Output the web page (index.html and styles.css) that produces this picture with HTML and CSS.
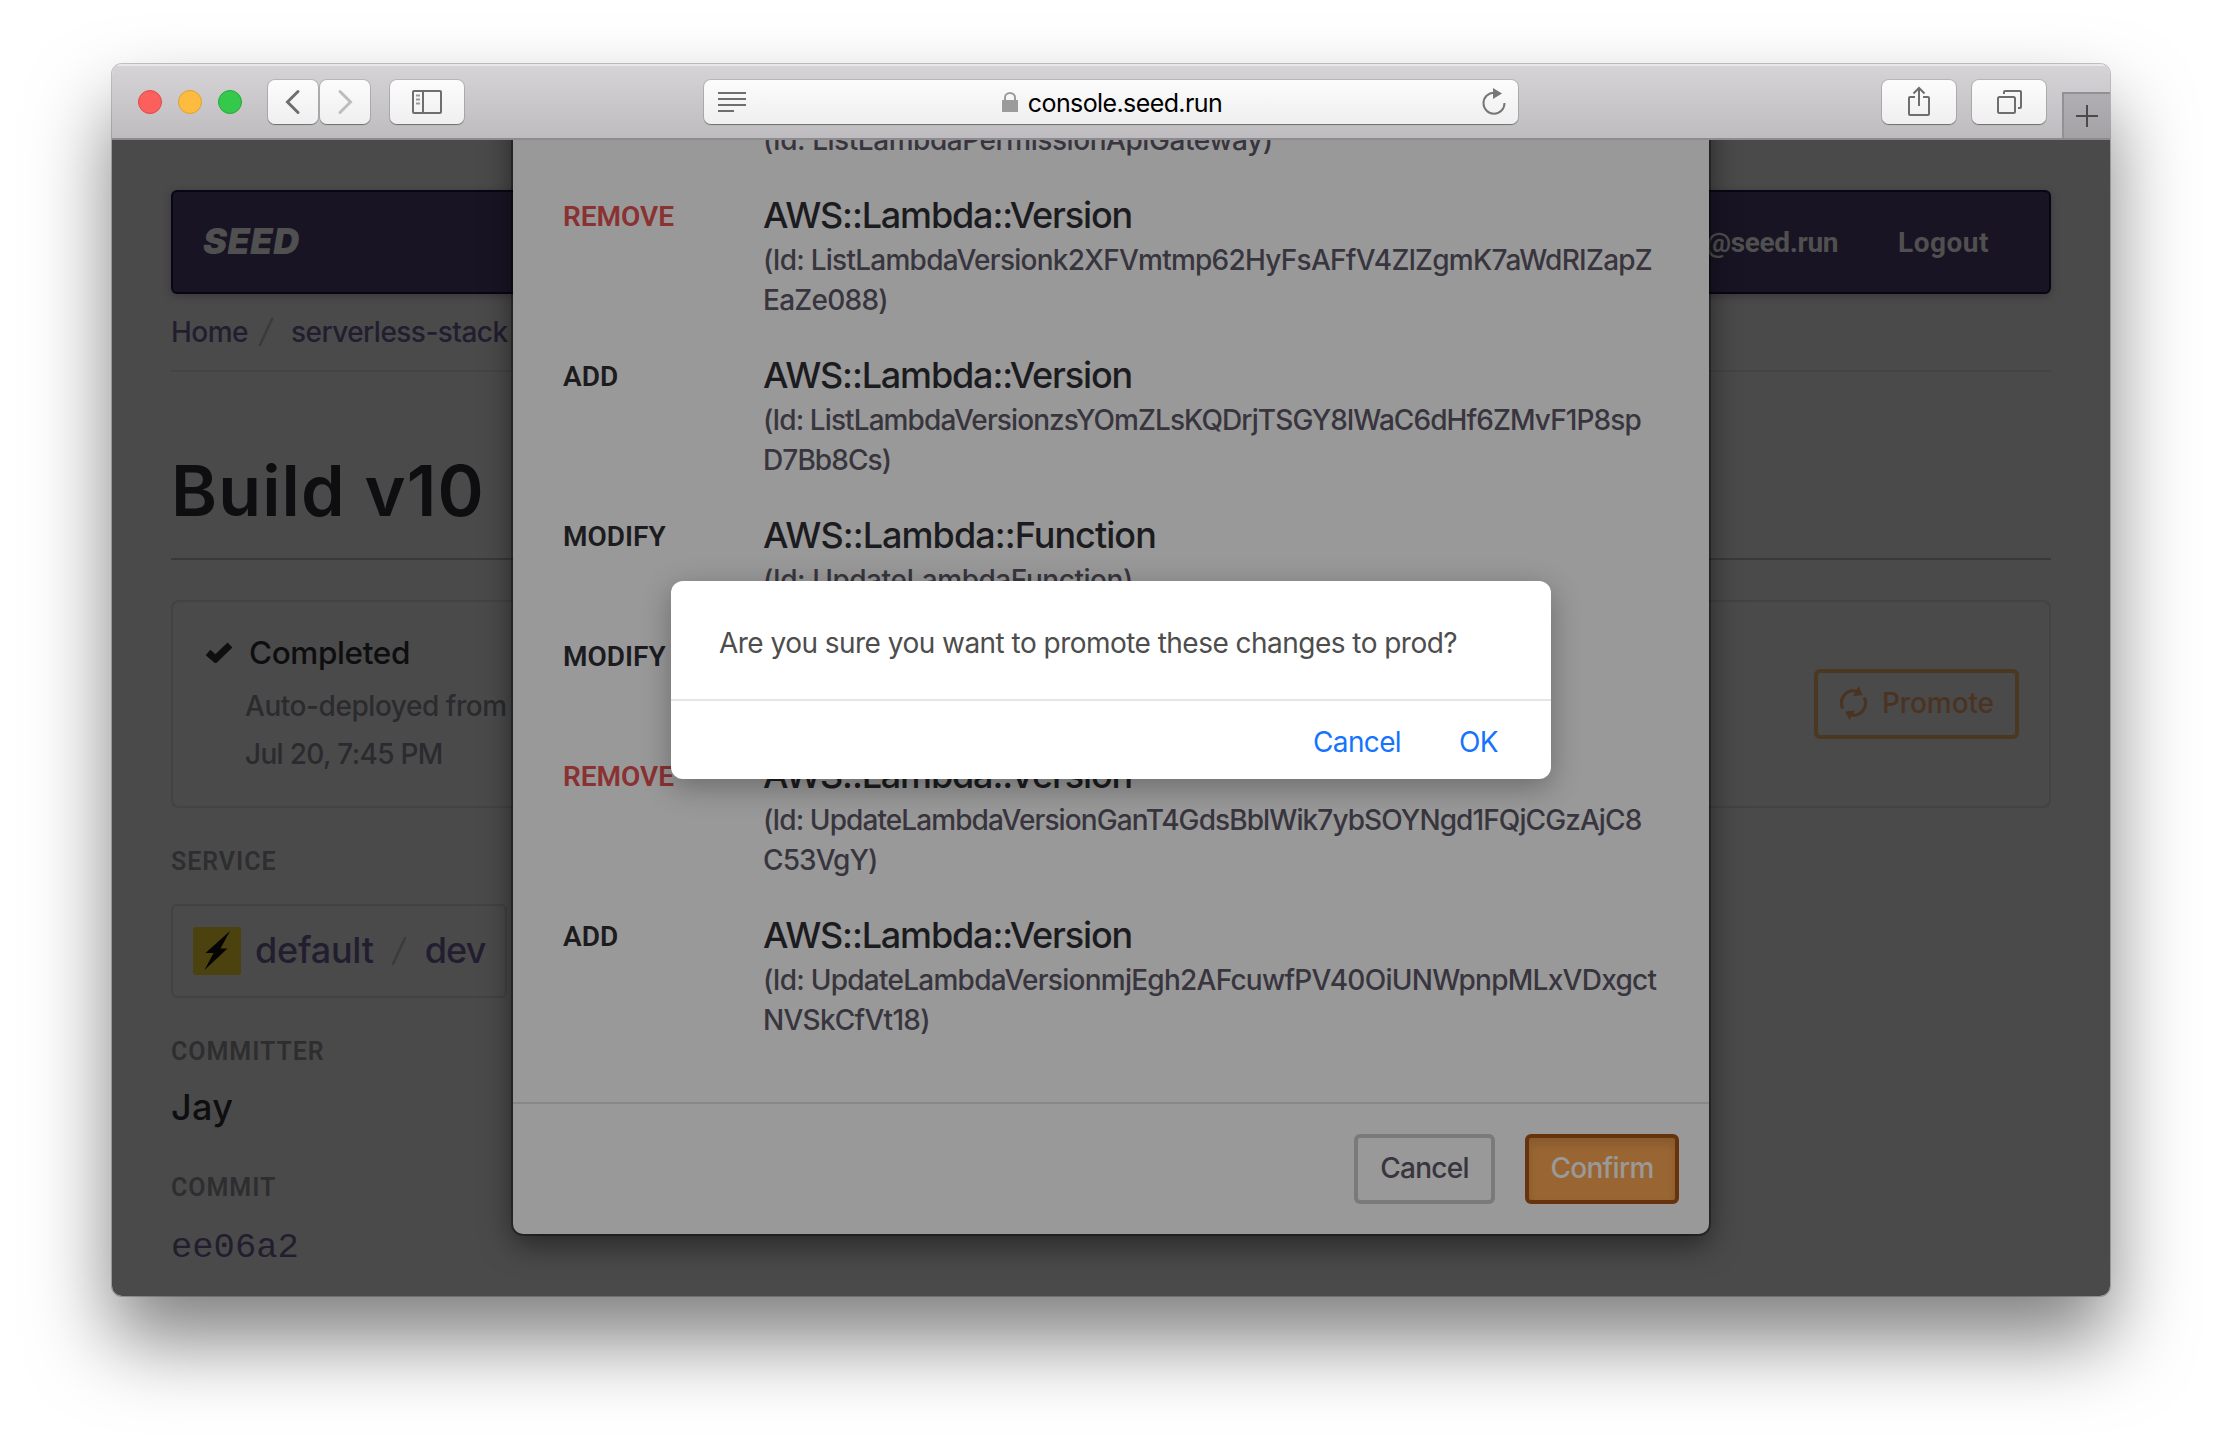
FILE: index.html
```html
<!DOCTYPE html>
<html lang="en">
<head>
<meta charset="utf-8">
<title>Seed Console</title>
<link rel="stylesheet" href="styles.css">
</head>
<body>
<div class="window">
  <header class="toolbar">
    <div class="lights"><i class="light red"></i><i class="light amber"></i><i class="light green"></i></div>
    <div class="history">
      <span class="tool"><svg width="50" height="44" viewBox="0 0 50 44"><path d="M30 11.500 19.500 22 30 32.500" fill="none" stroke="#6e6e6e" stroke-width="3" stroke-linecap="round"/></svg></span>
      <span class="tool"><svg width="50" height="44" viewBox="0 0 50 44"><path d="M20 11.500 30.500 22 20 32.500" fill="none" stroke="#bdbdbd" stroke-width="3" stroke-linecap="round"/></svg></span>
    </div>
    <span class="tool wide"><svg width="74" height="44" viewBox="0 0 74 44" fill="none" stroke="#6e6e6e" stroke-width="2"><rect x="23" y="11" width="28" height="22" rx="1"/><path d="M33 11v22"/><path d="M26 15.500h4M26 19.500h4M26 23.500h4" stroke="#999"/></svg></span>
    <div class="address">
      <svg width="30" height="24" viewBox="0 0 30 24" stroke="#6e6e6e" stroke-width="2"><path d="M0 3h28M0 9h28M0 15h28M0 21h16"/></svg>
      <span class="host"><svg width="16" height="20" viewBox="0 0 16 20"><path d="M3 9V5.500a5 4.500 0 0 1 10 0V9" fill="none" stroke="#9b9b9b" stroke-width="2"/><path d="M0 8h16v12H0z" fill="#9b9b9b"/></svg><b>console.seed.run</b></span>
      <svg class="reload" width="26" height="30" viewBox="0 0 26 30"><path d="M23.500 16A10.500 10.500 0 1 1 13 5.700" fill="none" stroke="#777" stroke-width="2"/><path d="M12 1v11l9-5.500z" fill="#777"/></svg>
    </div>
    <div class="actions">
      <span class="tool wide"><svg width="74" height="44" viewBox="0 0 74 44" fill="none" stroke="#6e6e6e" stroke-width="2"><path d="M33 17h-5q-1 0-1 1v16q0 1 1 1h18q1 0 1-1V18q0-1-1-1h-5M37 26V8M31.500 13.500 37 8l5.500 5.500"/></svg></span>
      <span class="tool wide"><svg width="74" height="44" viewBox="0 0 74 44" fill="none" stroke="#6e6e6e" stroke-width="2"><rect x="26" y="17" width="17" height="16" rx="1.500"/><path d="M32 14v-2q0-1 1-1h15q1 0 1 1v15q0 1-1 1h-2"/></svg></span>
    </div>
    <span class="newtab"><svg width="22" height="22" viewBox="0 0 22 22" stroke="#4a4a4a" stroke-width="2"><path d="M11 0v22M0 11h22"/></svg></span>
  </header>

  <div class="viewport">
    <main class="page">
      <nav class="navbar">
        <span class="brand">SEED</span>
        <span class="account">@seed.run</span>
        <span class="logout">Logout</span>
      </nav>
      <div class="crumbs"><a>Home</a><svg width="16" height="30" viewBox="0 0 16 30"><path d="M2 28 14 2" stroke="#3b3b3b" stroke-width="2.500" stroke-linecap="round"/></svg><a>serverless-stack</a></div>
      <h1>Build v10</h1>
      <section class="status">
        <div class="outcome">
          <p class="state"><svg width="28" height="21" viewBox="0 0 28 21"><path d="M3 10.500 10.500 17 25 3" fill="none" stroke="#0f0f11" stroke-width="7"/></svg>Completed</p>
          <p class="detail">Auto-deployed from</p>
          <p class="detail date">Jul 20, 7:45 PM</p>
        </div>
        <span class="promote"><svg width="28" height="34" viewBox="0 0 28 34" fill="none" stroke="#4b3322" stroke-width="3"><path d="M2.800 22.500A12 12 0 0 1 17 5.500"/><path d="M24.200 11.500A12 12 0 0 1 10 28.500"/><path d="M18.700 0 22.500 9.300 13 10zM9.500 34 5 25.500 15 24.500z" fill="#4b3322" stroke="none"/></svg>Promote</span>
      </section>
      <h2>SERVICE</h2>
      <div class="service">
        <svg width="48" height="48" viewBox="0 0 48 48"><rect width="48" height="48" rx="3" fill="#4b420f"/><path d="M37 4 27.500 21.500H34.500L11.500 43 20.500 26H12.500z" fill="#050505"/></svg>
        <a class="name">default</a>
        <svg width="16" height="30" viewBox="0 0 16 30"><path d="M2 28 14 2" stroke="#3b3b3b" stroke-width="2.500" stroke-linecap="round"/></svg>
        <a class="stage">dev</a>
      </div>
      <h2>COMMITTER</h2>
      <p class="committer">Jay</p>
      <h2 class="last">COMMIT</h2>
      <p class="commit">ee06a2</p>
    </main>

    <div class="modal">
      <div class="changes">
        <div class="change partial"><b></b><div><p class="short">(Id: ListLambdaPermissionApiGateway)</p></div></div>
        <div class="change"><b class="remove">REMOVE</b><div><h3>AWS::Lambda::Version</h3><p>(Id: ListLambdaVersionk2XFVmtmp62HyFsAFfV4ZlZgmK7aWdRIZapZ<br>EaZe088)</p></div></div>
        <div class="change"><b>ADD</b><div><h3>AWS::Lambda::Version</h3><p class="tight">(Id: ListLambdaVersionzsYOmZLsKQDrjTSGY8lWaC6dHf6ZMvF1P8sp<br>D7Bb8Cs)</p></div></div>
        <div class="change"><b>MODIFY</b><div><h3 class="function">AWS::Lambda::Function</h3><p class="short">(Id: UpdateLambdaFunction)</p></div></div>
        <div class="change"><b>MODIFY</b><div></div></div>
        <div class="change"><b class="remove">REMOVE</b><div><h3>AWS::Lambda::Version</h3><p class="tight">(Id: UpdateLambdaVersionGanT4GdsBblWik7ybSOYNgd1FQjCGzAjC8<br>C53VgY)</p></div></div>
        <div class="change"><b>ADD</b><div><h3>AWS::Lambda::Version</h3><p>(Id: UpdateLambdaVersionmjEgh2AFcuwfPV40OiUNWpnpMLxVDxgct<br>NVSkCfVt18)</p></div></div>
      </div>
      <footer class="modal-actions"><span class="btn">Cancel</span><span class="btn primary">Confirm</span></footer>
    </div>

    <div class="dialog">
      <p class="question">Are you sure you want to promote these changes to prod?</p>
      <div class="answers"><a>Cancel</a><a>OK</a></div>
    </div>
  </div>
</div>
</body>
</html>
```
FILE: styles.css
```css
* { box-sizing: border-box; }
body { margin: 0; height: 1456px; background: #fff; font-family: Inter, sans-serif; font-weight: 450; overflow: hidden; }
h1, h2, h3, p { margin: 0; font-weight: inherit; }
svg { display: block; flex: none; }
.window { display: flex; flex-direction: column; width: 1998px; height: 1232px; margin: 64px 0 0 112px; border-radius: 10px; overflow: hidden;
  box-shadow: 0 0 0 1px rgba(0,0,0,.22), 0 44px 80px rgba(0,0,0,.5); }

/* Browser toolbar */
.toolbar { display: flex; align-items: flex-start; height: 76px; padding: 16px 0 0 26px; border-bottom: 2px solid #8e8b90;
  background: linear-gradient(#d6d4d7, #bfbcc0); box-shadow: inset 0 2px #e8e7e9; }
.lights { display: flex; gap: 16px; padding-top: 10px; }
.light { width: 24px; height: 24px; border-radius: 50%; border: 1px solid #dd4a48; background: #fc605c; }
.amber { background: #fdbc40; border-color: #dea034; }
.green { background: #34c94a; border-color: #27a838; }
.history { display: flex; gap: 2px; margin: 0 20px 0 26px; }
.tool { width: 50px; height: 44px; border-radius: 7px; background: linear-gradient(#fcfcfc, #efefef); box-shadow: 0 0 0 1px rgba(0,0,0,.12), 0 1px 1px rgba(0,0,0,.35); }
.wide { width: 74px; }
.address { display: flex; align-items: center; justify-content: space-between; width: 814px; height: 44px; margin-left: 240px; padding: 0 11px 0 14px;
  border-radius: 7px; background: linear-gradient(#fcfcfc, #efefef); box-shadow: 0 0 0 1px rgba(0,0,0,.12), 0 1px 1px rgba(0,0,0,.35); }
.host { display: flex; align-items: center; gap: 10px; margin-right: 5px; font-size: 25px; letter-spacing: -.6px; color: #000; }
.host b { font-weight: 400; padding-top: 2px; }
.actions { display: flex; gap: 16px; margin-left: 364px; }
.newtab { display: flex; align-items: center; justify-content: center; width: 48px; height: 46px; margin: 12px 0 0 auto; border: solid #929094; border-width: 2px 0 0 2px; background: linear-gradient(#b0aeb2, #a5a2a6); }

/* Build page, dimmed */
.viewport { position: relative; flex: 1; overflow: hidden; background: #4a4a4a; }
.page { padding: 50px 59px; }
.navbar { display: flex; align-items: center; height: 104px; padding: 0 60px 0 30px; border: 2px solid #0a0516; border-radius: 6px; background: #191424; color: #505050;
  box-shadow: 0 2px 8px rgba(0,0,0,.25); font: 700 28px Roboto, sans-serif; }
.brand { font: italic 900 36px/40px Inter, sans-serif; letter-spacing: .5px; margin: 0 auto 2px 0; }
.account { letter-spacing: -.36px; }
.logout { margin-left: 60px; letter-spacing: .5px; }
.crumbs { display: flex; align-items: center; margin-top: 18px; padding-bottom: 18px; border-bottom: 2px solid #444; font-size: 28px; line-height: 40px; letter-spacing: -.53px; color: #231d30; }
.crumbs svg { margin: 0 17px 0 10px; }
h1 { margin-top: 77px; padding-bottom: 25px; border-bottom: 2px solid #393939; font-size: 70px; line-height: 84px; font-weight: 620; letter-spacing: 1.1px; color: #0e0e10; }
.status { display: flex; align-items: center; justify-content: space-between; height: 208px; margin-top: 40px; padding: 0 30px 0 32px; border: 2px solid #434343; border-radius: 8px; color: #2b2b2f; }
.outcome { padding-top: 2px; }
.state { display: flex; align-items: center; gap: 16px; margin-bottom: 9px; font-size: 31.5px; line-height: 40px; letter-spacing: -.38px; color: #0e0e10; }
.detail { margin-left: 40px; font-size: 28px; line-height: 48px; letter-spacing: -.45px; }
.date { letter-spacing: -.68px; }
.promote { display: flex; align-items: center; gap: 14px; height: 70px; width: 205px; padding: 0 0 2px 22px; border: 4px solid #4c3820; border-radius: 6px; font-size: 28px; letter-spacing: -.1px; color: #4b3322; }
h2 { margin-top: 39px; font: 600 25px/30px Roboto, sans-serif; letter-spacing: .95px; color: #2e2e31; }
h2.last { margin-top: 44px; }
.service { display: flex; align-items: center; width: 336px; height: 94px; margin-top: 27px; padding-left: 20px; border: 2px solid #424242; border-radius: 6px; font-size: 36px; line-height: 44px; color: #231d30; }
.service a { margin-bottom: 3px; }
.service .name { margin-left: 14px; margin-right: 17px; letter-spacing: -.25px; }
.service .stage { margin-left: 18px; letter-spacing: -.8px; }
.committer { margin-top: 18px; font-size: 36px; line-height: 44px; letter-spacing: .3px; color: #0e0e10; }
.commit { margin-top: 23px; font: 35.5px/44px "Liberation Mono", monospace; color: #231d30; }

/* Change list modal */
.modal { position: absolute; left: 401px; top: -67px; width: 1196px; border-radius: 10px; background: #999; color: #1c1c20;
  box-shadow: 0 0 0 2px rgba(0,0,0,.35), 0 10px 30px rgba(0,0,0,.5); }
.changes { display: grid; gap: 33px; padding: 0 50px 62px; }
.change { display: grid; grid-template-columns: 200px 1fr; min-height: 87px; }
.partial { padding-top: 47px; }
.change b { font: 600 28px/47px Roboto, sans-serif; }
.change .remove { color: #8a3131; }
.change h3 { margin-bottom: 3px; font-size: 36px; line-height: 44px; letter-spacing: -1.16px; }
.change .function { letter-spacing: -.95px; }
.change p { font-size: 28px; line-height: 40px; letter-spacing: -.74px; color: #38353e; white-space: nowrap; }
.change .tight { letter-spacing: -.91px; }
.change .short { letter-spacing: -.45px; }
.modal-actions { display: flex; justify-content: flex-end; gap: 30px; padding: 30px; border-top: 2px solid #888; }
.btn { display: flex; align-items: center; justify-content: center; width: 141px; height: 70px; padding-bottom: 2px; border: 4px solid #7a7a7a; border-radius: 6px; font-size: 28px; letter-spacing: -.7px; color: #38353e; }
.primary { width: 154px; border-color: #66330d; background: #996633; color: #999; box-shadow: inset 0 6px 10px rgba(0,0,0,.12); }

/* Confirmation dialog */
.dialog { position: absolute; left: 559px; top: 441px; width: 880px; height: 198px; border-radius: 12px; background: #fff; box-shadow: 0 8px 30px rgba(0,0,0,.3); font-weight: 400; }
.question { height: 120px; padding: 42px 0 0 48px; border-bottom: 2px solid #e5e5e5; font-size: 28px; line-height: 40px; letter-spacing: -.53px; color: #4d4d4d; white-space: nowrap; }
.answers { display: flex; justify-content: flex-end; gap: 58px; padding: 21px 53px 0; font-size: 28px; line-height: 40px; letter-spacing: -.63px; color: #1673ff; }
```
